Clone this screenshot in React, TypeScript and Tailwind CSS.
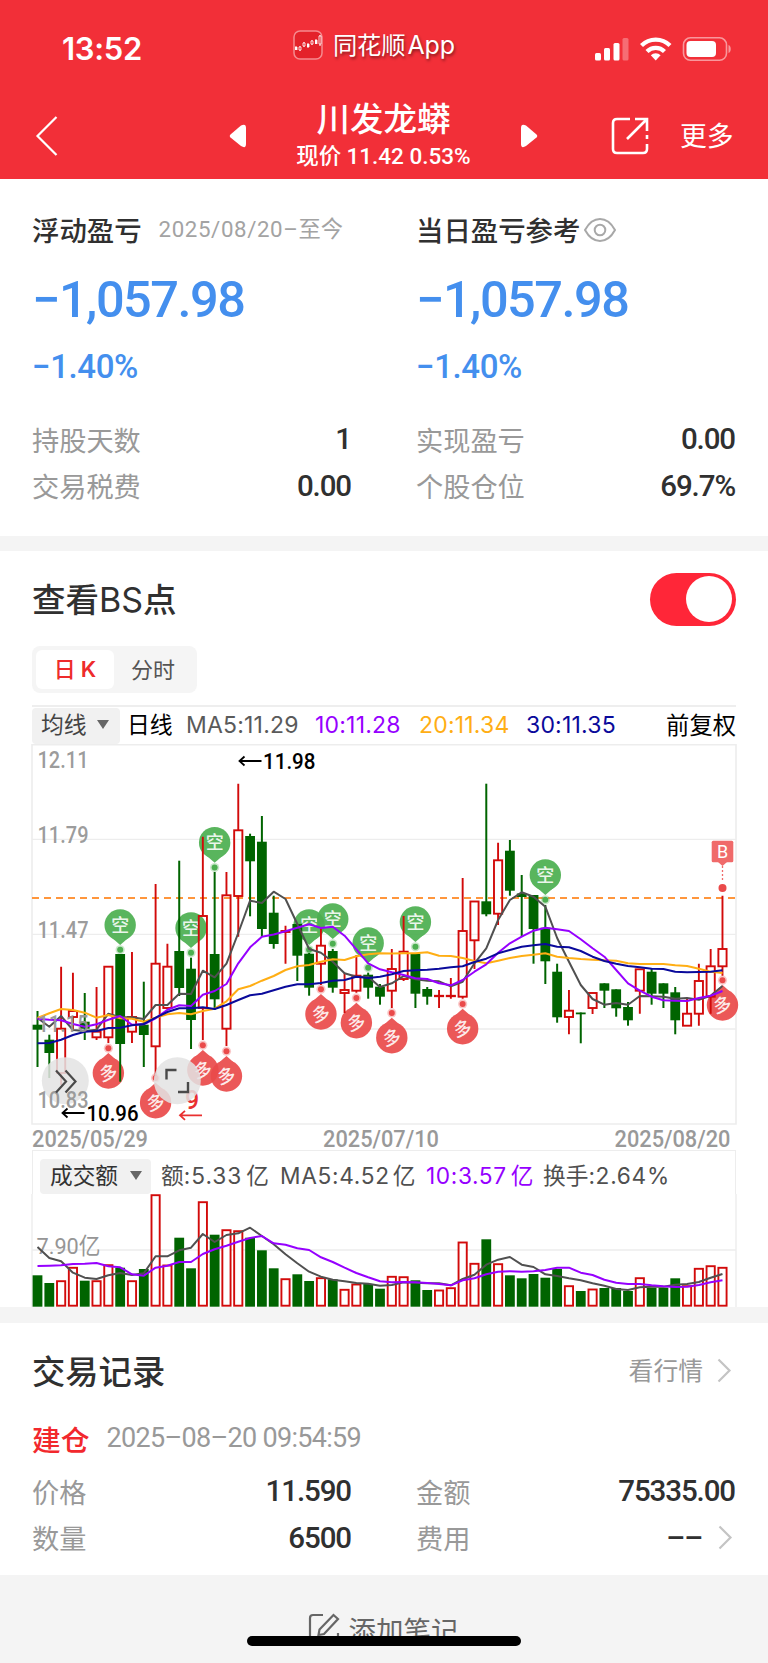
import { useState } from 'react'

type Candle = ['r' | 'g', number, number, number, number]

// [colour, high, body top, body bottom, low] in chart pixels
const candles: Candle[] = [
  ['g', 1011, 1024.7, 1029.7, 1067], ['g', 1034.7, 1039.7, 1053, 1078], ['r', 966.7, 1028.7, 1073, 1085],
  ['r', 972.7, 1011, 1017, 1029], ['g', 993, 1021.7, 1028.7, 1040], ['r', 987, 1031.7, 1037.3, 1040],
  ['r', 966, 966.7, 1037.3, 1043], ['g', 954, 954, 1044, 1081.7], ['r', 952, 1017, 1031.7, 1043],
  ['g', 981.7, 1024.7, 1035, 1067], ['r', 884, 963.7, 1046.3, 1076], ['r', 943.7, 966.7, 1008, 1009],
  ['g', 860.7, 951, 988, 996], ['g', 957.7, 968.7, 1020, 1049], ['r', 836.7, 916, 1008, 1040],
  ['g', 872, 954, 999.3, 1010], ['r', 872, 895.3, 1028.7, 1046], ['r', 783.7, 830.3, 896, 936.7],
  ['g', 833.7, 836, 861.3, 916.3], ['g', 816, 841.7, 929, 937], ['g', 895.7, 912.7, 944, 948.7],
  ['r', 925.7, 931, 932, 963.7], ['g', 924, 924, 955.7, 981], ['g', 953, 953.7, 987.7, 995.7],
  ['r', 928, 945.7, 963.7, 985], ['g', 949, 951, 987.7, 992.7], ['r', 972.7, 990, 993, 1013],
  ['r', 955, 975.7, 990.7, 992.7], ['g', 972.7, 974.7, 987.7, 998.7], ['g', 984, 986.7, 996.7, 1004.7],
  ['r', 949, 969, 990.7, 1008], ['r', 916, 951.7, 979, 981], ['g', 953, 953.7, 993.7, 1008],
  ['g', 987, 989, 996.7, 1004.7], ['r', 990, 995.8, 996.2, 1008], ['r', 978, 995.8, 996.2, 998.7],
  ['r', 878, 931, 996.7, 998.7], ['r', 901, 901.5, 940.3, 969], ['g', 783.7, 901.3, 914.3, 916.3],
  ['r', 842.7, 860.3, 913.7, 925], ['g', 840, 850.7, 890.7, 895.7], ['g', 875, 893.5, 897, 936.7],
  ['g', 895, 895, 929, 963.7], ['g', 905, 927.7, 961.3, 984], ['g', 963.7, 971.7, 1017.3, 1022.7],
  ['r', 990, 1010.7, 1017, 1034.3], ['g', 1012.5, 1012.5, 1014.3, 1043.3], ['r', 992.7, 993, 1008, 1014],
  ['g', 983.3, 983.3, 990.7, 1008], ['g', 989.3, 989.3, 1008.3, 1016.7], ['g', 1002, 1007, 1020.3, 1025.7],
  ['r', 969, 969.3, 990.7, 1013.7], ['g', 968.7, 971.7, 993.7, 1004.7], ['g', 983.3, 983.3, 993.7, 1008],
  ['g', 987, 992.3, 1020.3, 1034.3], ['r', 998.7, 1013.7, 1025.7, 1026], ['r', 963.7, 981, 1013.7, 1025.7],
  ['r', 949, 966.3, 996.7, 1013.7], ['r', 895.7, 949, 966.3, 975.7],
]

const ma5 = [1018, 1026.7, 1016, 1030, 1031, 1029.7, 1013.7, 1017.3, 1017.3, 1019, 1005, 1005, 993.7, 994, 970.7, 977.3, 963.7, 933, 900.7, 903, 891.7, 899, 924, 949, 952.7, 961.7, 973.3, 976.7, 976.7, 987, 983.3, 976, 979.3, 980.7, 981.3, 986.3, 981.7, 963.3, 948.3, 920, 900, 892.3, 896.7, 906.7, 938, 961.7, 985, 999, 1004.7, 1003, 1004.7, 996, 996.3, 996.7, 998.7, 998, 999.7, 995.7, 986]
const ma10 = [1018.7, 1019.7, 1020.3, 1024, 1026.7, 1024.3, 1019.7, 1016, 1024.7, 1024.3, 1018.3, 1009.7, 1005.3, 1006, 994.7, 991, 984, 963.3, 947.3, 936.7, 934.5, 931.3, 927.7, 924.3, 928, 926.7, 935.7, 949.3, 963.3, 969.3, 972.3, 975, 978.3, 979, 983.3, 985.3, 980, 971.7, 964.3, 952.7, 943.3, 936.7, 930.7, 927.7, 929.3, 931, 939.3, 948.3, 956.7, 970, 983.3, 990.7, 996.7, 1000.3, 1000.7, 1001, 998, 995.7, 991]
const ma20 = [1018, 1013.3, 1009, 1010, 1012.7, 1017.7, 1015, 1018.3, 1018.7, 1021.7, 1017.7, 1014.3, 1013, 1014.3, 1011, 1008.7, 1001.3, 989.3, 986, 980.7, 976, 970, 966.3, 965, 961.7, 959.3, 960, 956.3, 954.3, 953.3, 953.6, 953.3, 953.3, 952.3, 955.7, 956, 958, 961, 963.3, 960.7, 958, 956, 954.7, 953.3, 956.7, 958, 959, 959.7, 960.3, 960.7, 963.3, 964, 964, 964, 965.3, 966, 968.7, 971.7, 973]
const ma30 = [1043.3, 1043, 1039.7, 1035, 1031.7, 1031, 1028, 1027.7, 1025.3, 1024, 1017.7, 1012, 1008.3, 1008.3, 1007.3, 1009, 1005, 1000, 995.3, 993.7, 990.3, 986.7, 984.3, 984.3, 983, 980.7, 980, 976.7, 978, 976.7, 974.3, 971, 970.3, 969.7, 968.7, 967.3, 966.3, 962, 958.7, 953.3, 950, 946.7, 945.3, 944, 946.7, 947.3, 951, 956.7, 961, 963.7, 966, 967.3, 968.7, 969, 971.7, 972.3, 972, 971.7, 970.3]

const volume = [1275.3, 1283, 1280.7, 1267.3, 1280.7, 1280.7, 1264.7, 1267.7, 1280.7, 1269, 1194.7, 1265, 1237.7, 1268.3, 1201.7, 1234.7, 1229.7, 1230.7, 1237.7, 1250.3, 1268.3, 1278.7, 1274.3, 1281, 1277.7, 1279.3, 1289.3, 1284, 1284, 1288.7, 1276.3, 1276.7, 1280.3, 1290, 1290, 1287.7, 1242, 1263.3, 1239.3, 1263.7, 1275.3, 1278.3, 1274, 1277.7, 1269, 1285.7, 1291, 1289, 1288, 1288, 1291, 1277.7, 1287.7, 1287.7, 1278.3, 1285.7, 1268.3, 1265.7, 1267.3]
const volMa5 = [1247, 1258, 1261.3, 1272.7, 1277.7, 1279, 1275.3, 1273, 1275, 1273.3, 1256.3, 1256.3, 1250.3, 1247.7, 1234, 1242, 1235, 1233.3, 1227.7, 1236, 1244.3, 1254.3, 1263.3, 1271.7, 1276.7, 1279.7, 1281.3, 1283, 1283.7, 1285.7, 1285, 1282.3, 1282.7, 1283.3, 1283.3, 1285.3, 1279, 1274.7, 1264.7, 1259.7, 1257, 1264.7, 1267, 1274.3, 1276, 1278.3, 1280.3, 1283.3, 1285.7, 1289, 1290, 1287.3, 1286.7, 1286.7, 1284.7, 1284, 1282, 1277.7, 1274]
const volMa10 = [1266, 1265.7, 1265.3, 1264, 1263.7, 1263, 1266.3, 1267.3, 1274.3, 1275.7, 1267.7, 1265.7, 1262, 1262, 1254, 1249.3, 1245.7, 1241.7, 1238, 1236, 1243.3, 1244.7, 1248.3, 1250, 1257.3, 1262, 1267.7, 1273, 1277.3, 1281.3, 1282.3, 1282, 1282.3, 1283, 1284, 1285.3, 1280.3, 1278.3, 1274.3, 1271.7, 1271.3, 1271.7, 1271.3, 1270, 1267.7, 1267.7, 1272.7, 1275, 1279.7, 1282.7, 1284, 1284, 1285.3, 1286.3, 1287, 1286.7, 1285, 1282.3, 1280.3]

// [candle index, pin centre y]
const shortPins = [[7, 925], [13, 928], [15, 842.7], [23, 925], [25, 919], [28, 943], [32, 922], [43, 875]]
const longPins = [[6, 1073], [10, 1102.7], [14, 1070], [16, 1076], [24, 1014], [27, 1022.7], [30, 1037.7], [36, 1028.7], [58, 1005]]

const priceLabels: [string, number][] = [['12.11', 767.5], ['11.79', 842.7], ['11.47', 937.7], ['11.15', 1032], ['10.83', 1107.7]]

const cx = (i: number) => 37.5 + i * 11.81
const toPoints = (ys: number[]) => ys.map((y, i) => `${cx(i)},${y}`).join(' ')
const RED = '#d20a0a'
const GREEN = '#006400'

function Line({ ys, color }: { ys: number[]; color: string }) {
  return <polyline points={toPoints(ys)} fill="none" stroke={color} strokeWidth="2" strokeLinejoin="round" />
}

function Pin({ i, y, long }: { i: number; y: number; long?: boolean }) {
  const x = cx(i)
  const color = long ? '#ea4a4a' : '#4caf50'
  const s = long ? -1 : 1
  return (
    <g>
      <g opacity="0.92" fill={color}>
        <circle cx={x} cy={y} r="15.7" />
        <path d={`M${x - 8} ${y + s * 13} L${x} ${y + s * 20} L${x + 8} ${y + s * 13}z`} />
      </g>
      <circle cx={x} cy={y + s * 24.8} r="4.6" fill={color} opacity="0.3" />
      <circle cx={x} cy={y + s * 24.8} r="3" fill={color} />
      <text
        x={x}
        y={y + 6.5}
        textAnchor="middle"
        fontSize="18"
        fontWeight="500"
        fill="#fff"
        fillOpacity="0.9"
        transform={long ? `rotate(-14 ${x} ${y})` : undefined}
      >
        {long ? '多' : '空'}
      </text>
    </g>
  )
}

function Arrow({ x, y, color }: { x: number; y: number; color: string }) {
  return <path d={`M${x + 23} ${y}H${x + 1}M${x + 6} ${y - 4.5}L${x + 1} ${y}L${x + 6} ${y + 4.5}`} fill="none" stroke={color} strokeWidth="1.8" />
}

function PriceChart() {
  return (
    <svg width="768" height="406" viewBox="0 744 768 406" className="block overflow-visible font-['Roboto','Noto_Sans_CJK_SC',sans-serif]">
      <g stroke="#ededed" strokeWidth="1.3">
        <path d="M32 839.3H736M32 934.3H736M32 1029H736" />
        <path d="M32 744.8H736V1124H32z" fill="none" strokeWidth="1.6" />
      </g>
      <path d="M32 898H736" stroke="#ff963c" strokeWidth="2" strokeDasharray="7 5" />
      {shortPins.map(([i, y]) => <Pin key={i} i={i} y={y} />)}
      {longPins.map(([i, y]) => <Pin key={i} i={i} y={y} long />)}
      {candles.map(([c, high, top, bottom, low], i) => {
        const x = cx(i)
        if (c === 'g') {
          return (
            <g key={i} fill={GREEN}>
              <rect x={x - 1} y={high} width="2" height={low - high} />
              <rect x={x - 4.9} y={top} width="9.8" height={bottom - top} />
            </g>
          )
        }
        return (
          <g key={i} stroke={RED} strokeWidth="1.9" fill="none">
            <path d={`M${x} ${high}V${top}M${x} ${bottom}V${low}`} />
            <rect x={x - 4.1} y={top} width="8.2" height={bottom - top} />
          </g>
        )
      })}
      <Line ys={ma5} color="#505050" />
      <Line ys={ma20} color="#ffae14" />
      <Line ys={ma10} color="#9600ff" />
      <Line ys={ma30} color="#0a0a9b" />

      <g fill="#f06a6a">
        <rect x="711.7" y="840.7" width="21.6" height="21.6" rx="1.5" />
        <path d="M718 862L722.5 866L727 862z" />
        <path d="M722.5 866V882" stroke="#f06a6a" strokeWidth="1.3" strokeDasharray="2 2" />
        <circle cx="722.5" cy="888" r="4" fill="#ea4a4a" />
        <text x="722.5" y="858" fontSize="18" fill="#fff" textAnchor="middle">B</text>
      </g>

      <text x="185" y="1109" fontSize="25" fill="#e93030" fontWeight="500">9</text>
      <Arrow x={179} y={1115.3} color="#e93030" />
      <g opacity="0.86">
        <circle cx="65.3" cy="1080.7" r="23.5" fill="#e4e4e4" />
        <circle cx="177.3" cy="1080.7" r="23.5" fill="#e4e4e4" />
      </g>

      <g fill="#969696" fillOpacity="0.95" fontSize="23.5" fontWeight="500">
        {priceLabels.map(([label, y]) => (
          <text key={label} x="37.5" y={y} textLength="51" lengthAdjust="spacingAndGlyphs">{label}</text>
        ))}
      </g>
      <g fill="none" stroke="#4a4a4a" strokeWidth="2.2">
        <path d="M56 1070.5L66 1081.5L56 1092.5M65.5 1070.5L75.5 1081.5L65.5 1092.5" />
        <path d="M166.5 1079.5V1070H176.5M178 1092H188V1082" strokeWidth="2.4" />
      </g>

      <Arrow x={238.5} y={761} color="#000" />
      <Arrow x={61.5} y={1113} color="#000" />
      <g fontSize="22.5" fontWeight="500" fill="#000">
        <text x="263" y="769" textLength="52.5" lengthAdjust="spacingAndGlyphs">11.98</text>
        <text x="86.5" y="1121" textLength="52" lengthAdjust="spacingAndGlyphs">10.96</text>
      </g>

      <g fontSize="24" fontWeight="500" fill="#999">
        <text x="32" y="1147" textLength="116" lengthAdjust="spacingAndGlyphs">2025/05/29</text>
        <text x="323" y="1147" textLength="116" lengthAdjust="spacingAndGlyphs">2025/07/10</text>
        <text x="614.5" y="1147" textLength="116" lengthAdjust="spacingAndGlyphs">2025/08/20</text>
      </g>
    </svg>
  )
}

function VolumeChart() {
  return (
    <svg width="768" height="113" viewBox="0 1194 768 113" className="block font-['Roboto','Noto_Sans_CJK_SC',sans-serif]">
      <path d="M32 1194V1307M736 1194V1307M32 1250H736" stroke="#ededed" strokeWidth="1.4" />
      <text x="36.5" y="1253.5" fontSize="22.5" fill="#969696" textLength="64" lengthAdjust="spacingAndGlyphs">7.90亿</text>
      {volume.map((top, i) =>
        candles[i][0] === 'g' ? (
          <rect key={i} x={cx(i) - 4.9} y={top} width="9.8" height={1306.7 - top} fill={GREEN} />
        ) : (
          <rect key={i} x={cx(i) - 4.1} y={top + 0.5} width="8.2" height={1305.2 - top} fill="#fff" stroke={RED} strokeWidth="1.9" />
        )
      )}
      <Line ys={volMa5} color="#505050" />
      <Line ys={volMa10} color="#9600ff" />
    </svg>
  )
}

function Chevron() {
  return (
    <svg width="15" height="25" viewBox="0 0 15 25" fill="none" stroke="#c4c4c4" strokeWidth="2.2">
      <path d="M1.5 1.5L12.5 12.5L1.5 23.5" />
    </svg>
  )
}

function Caret() {
  return (
    <svg width="12" height="9" viewBox="0 0 12 9" fill="#666">
      <path d="M0 0H12L6 9z" />
    </svg>
  )
}

function Row({ label, value, more }: { label: string; value: string; more?: boolean }) {
  return (
    <div className="flex h-[46.5px] items-center justify-between">
      <span className="text-[27.2px] text-[#999]">{label}</span>
      <span className="mr-px flex items-center font-['Roboto'] text-[29.5px] font-medium tracking-[-1.1px] text-[#303030]">
        {value}
        {more && <span className="mr-[2px] ml-4"><Chevron /></span>}
      </span>
    </div>
  )
}

function Summary({ title, children }: { title: string; children: React.ReactNode }) {
  return (
    <div className="flex-1">
      <div className="flex h-[50px] items-center">
        <h2 className="text-[27.4px] font-medium text-[#303030]">{title}</h2>
        {children}
      </div>
      <p className="mt-[17px] h-[56px] font-['Roboto'] text-[50.5px] leading-[56px] font-medium tracking-[-1.5px] text-[#448fee]">−1,057.98</p>
      <p className="mt-[19px] h-[40px] font-['Roboto'] text-[33px] leading-[40px] font-medium tracking-[-0.4px] text-[#448fee]">−1.40%</p>
    </div>
  )
}

export default function App() {
  const [showBs, setShowBs] = useState(true)
  const [tab, setTab] = useState('day')

  return (
    <main className="relative h-[1663px] w-[768px] overflow-hidden bg-white font-['Noto_Sans_CJK_SC',sans-serif]">
      <header className="h-[179px] bg-[#f22f38] text-white">
        <div className="flex h-[90px] items-center pt-[4px]">
          <span className="ml-[62px] w-[231px] pt-[4px] font-['Inter'] text-[31px] font-semibold tracking-[-0.3px]">13:52</span>
          <div className="flex w-[302px] items-center pb-[4px]">
            <svg width="30" height="30" viewBox="0 0 30 30" fill="none">
              <rect x="1" y="1" width="28" height="28" rx="6" fill="#e4222a" stroke="#f58b8f" strokeWidth="1.5" />
              <path d="M3 16V20M7 16V21M11 12V17M15 13V18M19 10V15M23 9V14M27 5V16" stroke="#fff" strokeWidth="1" />
              <path d="M2 17h2.4v3H2zM14 14h2.4v3H14zM22 10h2.4v4H22z" fill="#fff" />
              <path d="M6 17h2v3H6zM10 13h2v3h-2zM18 11h2v3h-2zM26 6h2v8h-2z" fill="#e4222a" stroke="#fff" strokeWidth="0.8" />
            </svg>
            <span className="ml-[10px] text-[24.3px] tracking-[-0.2px] [text-shadow:1px_2px_3px_rgba(0,0,0,0.45)]">
              同花顺 <span className="-ml-[3px] font-['Inter'] text-[25px]">App</span>
            </span>
          </div>
          <svg width="140" height="28" viewBox="595 35 140 28" fill="#fff" className="mt-[4px]">
            <rect x="595" y="53" width="6" height="7.500" rx="1.500" />
            <rect x="604" y="48" width="6" height="12.500" rx="1.500" />
            <rect x="613.500" y="43" width="6" height="17.500" rx="1.500" />
            <rect x="622.500" y="38" width="6" height="22.500" rx="1.500" opacity="0.3" />
            <g fill="none" stroke="#fff" strokeWidth="4.200">
              <path d="M641.500 45.500a20 20 0 0 1 28.500 0" />
              <path d="M647 51.500a12.200 12.200 0 0 1 17.500 0" />
            </g>
            <path d="M655.700 60.500L650.800 55.200a7 7 0 0 1 9.800 0z" />
            <rect x="683.500" y="37.800" width="43" height="22.500" rx="7" fill="none" stroke="#fff" strokeWidth="1.600" opacity="0.5" />
            <rect x="686.500" y="41" width="29.500" height="16" rx="4" />
            <path d="M728.500 45v8c3-1 3-7 0-8z" opacity="0.5" />
          </svg>
        </div>
        <div className="flex h-[89px] items-center pt-[2px]">
          <svg width="24" height="42" viewBox="0 0 24 42" fill="none" stroke="#fff" strokeWidth="2.2" className="ml-[35px]">
            <path d="M21.500 2L2.500 21L21.500 40" />
          </svg>
          <svg width="18" height="24" viewBox="0 0 18 24" fill="#fff" className="ml-[170px]">
            <path d="M1.500 10.500L12 1.500Q17 -1 17 4V20Q17 25 12 22L1.500 13.500Q0 12 1.500 10.500z" />
          </svg>
          <div className="flex w-[273px] flex-col items-center">
            <h1 className="text-[33.500px] leading-[40px] font-medium">川发龙蟒</h1>
            <p className="mt-[2px] pb-[3px] text-[22.5px] leading-[30px] font-medium">
              现价 <span className="font-['Roboto']">11.42 0.53%</span>
            </p>
          </div>
          <svg width="18" height="24" viewBox="0 0 18 24" fill="#fff">
            <path d="M16.500 10.500L6 1.500Q1 -1 1 4V20Q1 25 6 22L16.500 13.500Q18 12 16.500 10.500z" />
          </svg>
          <svg width="38" height="38" viewBox="0 0 38 38" fill="none" stroke="#fff" strokeWidth="2.600" className="ml-[73px]">
            <path d="M19 2H6Q2 2 2 6V32Q2 36 6 36H32Q36 36 36 32V27M36 22V18" />
            <path d="M24 2H36V14M36 2L16 22" />
          </svg>
          <span className="ml-[31px] text-[26.8px]">更多</span>
        </div>
      </header>

      <section className="h-[357px] px-8 pt-[26px]">
        <div className="flex gap-[64px]">
          <Summary title="浮动盈亏">
            <span className="ml-[17px] pb-[2px] text-[22.3px] text-[#a3a3a3]">
              <span className="font-['Roboto'] tracking-[0.6px]">2025/08/20–</span>至今
            </span>
          </Summary>
          <Summary title="当日盈亏参考">
            <svg width="34" height="26" viewBox="0 0 34 26" fill="none" stroke="#a8a8a8" strokeWidth="2" className="ml-[3px]">
              <path d="M2 13Q8 2 17 2T32 13Q26 24 17 24T2 13z" />
              <circle cx="17" cy="13" r="5.3" />
            </svg>
          </Summary>
        </div>
        <div className="mt-[29px] grid grid-cols-2 gap-x-[64px]">
          <Row label="持股天数" value="1" />
          <Row label="实现盈亏" value="0.00" />
          <Row label="交易税费" value="0.00" />
          <Row label="个股仓位" value="69.7%" />
        </div>
      </section>

      <div className="h-[15px] bg-[#f4f4f4]" />

      <section className="h-[756px]">
        <div className="flex h-[95px] items-center justify-between px-8">
          <h2 className="text-[33.5px] font-medium text-[#303030]">查看<span className="font-['Inter'] text-[34px] font-normal">BS</span>点</h2>
          <button onClick={() => setShowBs(!showBs)} className="mt-px flex h-[53px] w-[86px] items-center rounded-full bg-[#ff2638] px-[4px]">
            <span className={showBs ? 'ml-auto size-[46px] rounded-full bg-white' : 'size-[46px] rounded-full bg-white'} />
          </button>
        </div>
        <div className="ml-8 flex h-[47px] w-[165px] items-center rounded-lg bg-[#f5f5f5] p-1 text-[22px]">
          <button
            onClick={() => setTab('day')}
            className={tab === 'day' ? 'h-[39px] w-[78px] rounded-md bg-white pb-[2px] font-medium text-[#ee2b2b]' : 'h-[39px] w-[78px] pb-[2px] text-[#666]'}
          >
            日<span className="ml-[5px] font-['Inter'] font-semibold">K</span>
          </button>
          <button
            onClick={() => setTab('time')}
            className={tab === 'time' ? 'h-[39px] w-[78px] rounded-md bg-white pb-[2px] font-medium text-[#ee2b2b]' : 'h-[39px] w-[78px] pb-[2px] text-[#555]'}
          >
            分时
          </button>
        </div>

        <div className="mx-8 mt-[12px] flex h-[39px] items-center border-t-2 border-[#eee] text-[22.8px] whitespace-nowrap">
          <span className="flex h-[36px] w-[88px] items-center gap-[10px] rounded bg-[#f1f1f1] pb-[2px] pl-[9px] text-[#444]">均线<Caret /></span>
          <span className="ml-[7px] w-[59px] pb-[2px] text-black">日线</span>
          <div className="flex pb-px font-['Inter'] text-[23px] tracking-[0.2px]">
            <span className="w-[129px] text-[#5a5a5a]">MA5:11.29</span>
            <span className="w-[104px] text-[#9600ff]">10:11.28</span>
            <span className="w-[107px] text-[#ffae14]">20:11.34</span>
            <span className="text-[#0a0a9b]">30:11.35</span>
          </div>
          <span className="ml-auto pb-[3px] text-[23.3px] text-black">前复权</span>
        </div>

        <PriceChart />
        <div className="mx-8 flex h-[44px] items-center border border-b-0 border-[#ededed] pt-[7px] pl-[7px] text-[22.7px] whitespace-nowrap text-[#505050]">
          <span className="mr-[10px] flex h-[35px] w-[111px] items-center gap-[12px] rounded bg-[#f1f1f1] pb-[2px] pl-[10px] text-[#333]">成交额<Caret /></span>
          <span className="w-[119px]">额<span className="mr-1 font-['Inter'] tracking-[1px]">:5.33</span>亿</span>
          <span className="w-[146px]"><span className="mr-[3px] font-['Inter'] tracking-[0.7px]">MA5:4.52</span>亿</span>
          <span className="w-[117px] text-[#9600ff]"><span className="mr-1 font-['Inter'] tracking-[0.6px]">10:3.57</span>亿</span>
          <span>换手<span className="font-['Inter'] tracking-[0.7px]">:2.64%</span></span>
        </div>
        <VolumeChart />
      </section>

      <div className="h-[16px] bg-[#f4f4f4]" />

      <section className="h-[252px] px-8">
        <div className="flex h-[93px] items-center justify-between">
          <h2 className="text-[33.3px] font-medium text-[#303030]">交易记录</h2>
          <span className="flex items-center gap-[14px] pt-px pr-[4px] text-[24.8px] text-[#999]">看行情<Chevron /></span>
        </div>
        <div className="mb-[7px] flex h-[45px] items-center">
          <span className="text-[28.8px] font-medium text-[#f2282d]">建仓</span>
          <span className="ml-[17px] font-['Roboto'] text-[27px] tracking-[-0.7px] text-[#999]">2025–08–20 09:54:59</span>
        </div>
        <div className="grid grid-cols-2 gap-x-[64px]">
          <Row label="价格" value="11.590" />
          <Row label="金额" value="75335.00" />
          <Row label="数量" value="6500" />
          <Row label="费用" value="––" more />
        </div>
      </section>

      <footer className="flex h-[88px] justify-center bg-[#f4f4f4] pt-[34px] pr-[2px] text-[27.5px] leading-[40px] text-[#666]">
        <svg width="32" height="32" viewBox="0 0 32 32" fill="none" stroke="#666" strokeWidth="2.2" className="mt-[4px] mr-[9px]">
          <path d="M15 2H5Q2 2 2 5V29H30V20" />
          <path d="M25.500 2L30 6L16 21L10.500 22L11.500 16.500z" />
        </svg>
        添加笔记
      </footer>
      <div className="absolute top-[1636px] left-[247px] h-[27px] w-[274px] bg-[#f4f4f4]">
        <div className="h-[10px] rounded-full bg-black" />
      </div>
    </main>
  )
}
